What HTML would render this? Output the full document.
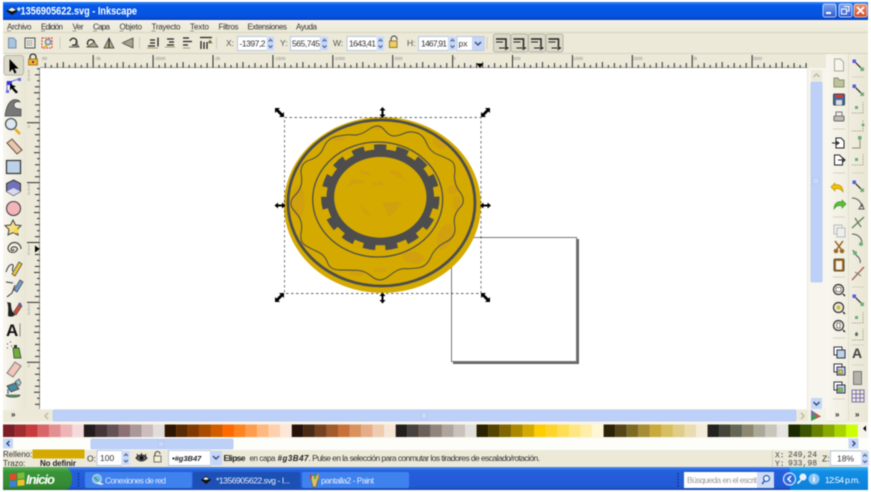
<!DOCTYPE html>
<html><head><meta charset="utf-8"><title>Inkscape</title>
<style>
html,body{margin:0;padding:0;background:#fff;width:871px;height:492px;overflow:hidden}
svg{display:block;filter:blur(.45px)}
text{font-family:"Liberation Sans",sans-serif;fill:#333;font-size:8.5px}
</style></head><body>
<svg width="871" height="492" viewBox="0 0 871 492" xmlns="http://www.w3.org/2000/svg">
<defs>
<linearGradient id="tb" x1="0" y1="0" x2="0" y2="1"><stop offset="0" stop-color="#2f83f4"/><stop offset=".2" stop-color="#0558e6"/><stop offset=".8" stop-color="#0553e0"/><stop offset="1" stop-color="#0a3fb8"/></linearGradient>
<linearGradient id="tk" x1="0" y1="0" x2="0" y2="1"><stop offset="0" stop-color="#4a8cf0"/><stop offset=".15" stop-color="#2560dc"/><stop offset=".85" stop-color="#2359d4"/><stop offset="1" stop-color="#1a47ac"/></linearGradient>
<linearGradient id="tray" x1="0" y1="0" x2="0" y2="1"><stop offset="0" stop-color="#3fb2f2"/><stop offset=".2" stop-color="#128fe6"/><stop offset="1" stop-color="#0d7fd8"/></linearGradient>
<linearGradient id="st" x1="0" y1="0" x2="0" y2="1"><stop offset="0" stop-color="#5cb55c"/><stop offset=".2" stop-color="#3a943a"/><stop offset=".85" stop-color="#338a33"/><stop offset="1" stop-color="#2a702a"/></linearGradient>
<linearGradient id="pl" x1="0" y1="0" x2="1" y2="0"><stop offset="0" stop-color="#f8f6ee"/><stop offset="1" stop-color="#e9e6d4"/></linearGradient>
<linearGradient id="men" x1="0" y1="0" x2="0" y2="1"><stop offset="0" stop-color="#f3f1e5"/><stop offset="1" stop-color="#ebe8d6"/></linearGradient>
<linearGradient id="bm" x1="0" y1="0" x2="0" y2="1"><stop offset="0" stop-color="#7fa6ef"/><stop offset="1" stop-color="#2b58cf"/></linearGradient>
<linearGradient id="bc" x1="0" y1="0" x2="0" y2="1"><stop offset="0" stop-color="#ee9274"/><stop offset="1" stop-color="#d24a22"/></linearGradient>
<pattern id="rh" patternUnits="userSpaceOnUse" x="32.8" y="54" width="59.9" height="14">
<path d="M.5 1V14M6.5 11V14M12.5 9V14M18.5 11V14M24.5 9V14M30.5 8V14M36.5 11V14M42.5 9V14M48.5 11V14M54.5 9V14" stroke="#2a2a2a" fill="none"/></pattern>
<pattern id="rv" patternUnits="userSpaceOnUse" x="26" y="2.4" width="14" height="59.9">
<path d="M1 .5H14M11 6.5H14M9 12.5H14M11 18.5H14M9 24.5H14M8 30.5H14M11 36.5H14M9 42.5H14M11 48.5H14M9 54.5H14" stroke="#2a2a2a" fill="none"/></pattern>
<g id="sp"><rect width="7" height="14" fill="#c6d6f6" stroke="#dbe4f8"/><path d="M1.6 5L3.5 3l1.9 2M1.6 9l1.9 2 1.9-2" fill="none" stroke="#44598c" stroke-width="1.1"/></g>
<path id="hd" d="M-4.5-4.500H.5L-1-3l4 4 1.500-1.500v5h-5L1 3l-4-4-1.500 1.500z" fill="#000"/>
<path id="hv" d="M0-5.500L3-2H1V2H3L0 5.500-3 2H-1V-2H-3z" fill="#000"/>
<g id="snap"><rect x="-8.500" y="-9" width="17" height="18" rx="2" fill="#dcd9c8" stroke="#b9b6a6"/><path d="M-6-4H4V3" fill="none" stroke="#222" stroke-width="1.500"/><path d="M-6-1H1" stroke="#222"/><path d="M-3 5H5M3 3l3 2-3 2" fill="none" stroke="#222"/></g>
<g id="pt"><path d="M-3-3L3 3" stroke="#222" stroke-width="1.200"/><rect x="-5.500" y="-5.500" width="3.500" height="3.500" fill="#5a5adf"/><rect x="2.500" y="2.500" width="3.500" height="3.500" fill="#6fae7a"/></g>
<g id="sn"><path d="M-5 6H6M6 6V-5" fill="none" stroke="#a9a98c" stroke-dasharray="1.500 1"/><rect x="-2" y="-1" width="3" height="3" fill="#6fae7a"/></g>
</defs>

<!-- window base -->
<rect x="3" y="2" width="865" height="488" fill="#ece9d8"/>
<rect x="3" y="2" width="865" height="18" fill="url(#tb)"/>
<path d="M6 11l6-4 6 4-6 4z" fill="#111"/><path d="M8 10l4-2.500 4 2.500-4 1.500z" fill="#eee"/>
<text x="17" y="14.500" textLength="120" lengthAdjust="spacingAndGlyphs" style="fill:#fff;font-weight:bold;font-size:11px">*1356905622.svg - Inkscape</text>
<rect x="823" y="4" width="13" height="13" rx="2" fill="url(#bm)" stroke="#dfe8fb" stroke-width=".8"/><rect x="826" y="12" width="5" height="2" fill="#fff"/>
<rect x="839" y="4" width="13" height="13" rx="2" fill="url(#bm)" stroke="#dfe8fb" stroke-width=".8"/><path d="M844 6.500h5v4.500h-2M841.500 9h5v5h-5z" fill="none" stroke="#fff"/>
<rect x="854" y="4" width="13" height="13" rx="2" fill="url(#bc)" stroke="#f3dcd4" stroke-width=".8"/><path d="M857 7l7 7M864 7l-7 7" stroke="#fff" stroke-width="1.800"/>

<!-- menu -->
<rect x="3" y="20" width="865" height="13" fill="url(#men)"/>
<path d="M3 32.500H868" stroke="#d8d5c2"/>
<g style="font-size:8px">
<text x="7" y="29.500" style="font-size:8px" textLength="24.500">Archivo</text><text x="41" y="29.500" style="font-size:8px" textLength="22">Edición</text><text x="72.500" y="29.500" style="font-size:8px" textLength="11">Ver</text><text x="93" y="29.500" style="font-size:8px" textLength="17">Capa</text><text x="119.500" y="29.500" style="font-size:8px" textLength="22.500">Objeto</text><text x="151.500" y="29.500" style="font-size:8px" textLength="29">Trayecto</text><text x="190" y="29.500" style="font-size:8px" textLength="19">Texto</text><text x="218.500" y="29.500" style="font-size:8px" textLength="20">Filtros</text><text x="247.500" y="29.500" style="font-size:8px" textLength="39.500">Extensiones</text><text x="296" y="29.500" style="font-size:8px" textLength="21">Ayuda</text>
</g>
<path d="M7 31h4M41 31h4M72.500 31h4M93 31h4M119.500 31h4M151.500 31h4M190 31h4" stroke="#555" stroke-width=".6"/>

<!-- command bar -->
<rect x="3" y="33" width="865" height="21" fill="#ece9d8"/>
<path d="M3 53.500H868" stroke="#d6d3c0"/>
<path d="M60 37v12M139.500 37v12M216.500 37v12M487 37v12" stroke="#cfccba"/>
<path d="M8.500 38h5l2.500 2.500V48H8.500z" fill="#a8c4e0" stroke="#7790aa"/>
<rect x="25" y="38" width="10" height="10" fill="#e6e6de" stroke="#555"/><path d="M27 41h6M27 43h6M27 45h6" stroke="#777" stroke-dasharray="1 1"/>
<rect x="42" y="38" width="10" height="10" fill="#f4ecd0" stroke="#d23a3a" stroke-dasharray="2 1"/><circle cx="48" cy="42" r="2.800" fill="#c8dcec" stroke="#667"/><path d="M43 47l3-2 2 2z" fill="#d4aa00"/>
<g fill="none" stroke="#222" stroke-width="1.300">
<path d="M70 41a3.500 3.500 0 1 1 2 4"/><path d="M88 45a3.500 3.500 0 1 1 5 1"/></g>
<path d="M69 47h10l-3-5v5zM87 47h11l-4-5zM104 48l5-10 5 10zM122 43l11-5v10z" fill="#b0a68a" stroke="#333" stroke-width=".7"/>
<path d="M109 38v10" stroke="#222"/><path d="M122 43h11" stroke="#999"/>
<g stroke="#222" stroke-width="1.300"><path d="M148 46h7M150 43h5M150 40h5M158 37.500v9"/><path d="M167 39h7M169 42h5M167 45h7" /><path d="M183 38h6M183 41.500h9M183 45h5"/><path d="M200 37.500h12M201 41v8M204 42v7M207 42v7"/></g>
<path d="M147 48h11M165 47h10M183 48h7M210 40l-2 3h4z" stroke="#a8986a" fill="#222"/>

<text x="226" y="46" style="font-size:8.500px;fill:#555">X:</text>
<rect x="237.500" y="36.500" width="29.500" height="14" fill="#fff" stroke="#b8c8dc"/><text x="239.500" y="46.500" style="font-size:8.500px" textLength="26">-1397,2</text><use href="#sp" x="267" y="36.500"/>
<text x="280" y="46" style="font-size:8.500px;fill:#555">Y:</text>
<rect x="290.500" y="36.500" width="30" height="14" fill="#fff" stroke="#b8c8dc"/><text x="292" y="46.500" style="font-size:8.500px" textLength="28">565,745</text><use href="#sp" x="321" y="36.500"/>
<text x="333" y="46" style="font-size:8.500px;fill:#555">W:</text>
<rect x="347" y="36.500" width="30" height="14" fill="#fff" stroke="#b8c8dc"/><text x="349" y="46.500" style="font-size:8.500px" textLength="27">1643,41</text><use href="#sp" x="377" y="36.500"/>
<path d="M391 41v-2a3 3 0 0 1 6 0v1" fill="none" stroke="#555" stroke-width="1.200"/><rect x="389.500" y="41" width="7.500" height="6.500" fill="#f0d060" stroke="#776020" stroke-width=".8"/>
<text x="407" y="46" style="font-size:8.500px;fill:#555">H:</text>
<rect x="418.500" y="36.500" width="30" height="14" fill="#fff" stroke="#b8c8dc"/><text x="421" y="46.500" style="font-size:8.500px" textLength="26">1467,91</text><use href="#sp" x="449" y="36.500"/>
<rect x="457" y="36.500" width="27" height="14" fill="#fff" stroke="#b8c8dc"/><text x="458.500" y="46.500" style="font-size:8.500px">px</text><rect x="472" y="37" width="12" height="13" fill="#c6d6f6"/><path d="M475 42l3 3 3-3" fill="none" stroke="#3a4f80" stroke-width="1.500"/>
<use href="#snap" x="502" y="43"/><use href="#snap" x="519.500" y="43"/><use href="#snap" x="537" y="43"/><use href="#snap" x="554.500" y="43"/>

<!-- side panels -->
<rect x="3" y="54" width="23" height="367" fill="url(#pl)"/>
<rect x="826" y="54" width="42" height="367" fill="url(#pl)"/>
<path d="M848.500 54V421" stroke="#e2dfcd"/>
<rect x="3" y="410" width="37" height="12" fill="#ece9d8"/>

<!-- rulers -->
<rect x="26" y="54" width="782" height="14" fill="#ece9d8"/>
<rect x="26" y="54" width="14" height="356" fill="#ece9d8"/>
<rect x="40" y="54" width="767" height="14" fill="url(#rh)"/>
<rect x="26" y="68" width="14" height="341" fill="url(#rv)"/>
<path d="M40 67.500H807M39.500 68V409" stroke="#555" stroke-width=".6"/>
<text x="42" y="60" style="font-size:4.500px;fill:#888">00</text><text x="94.500" y="60" style="font-size:4.500px;fill:#888">-3k</text><text x="154" y="60" style="font-size:4.500px;fill:#888">-2500</text><text x="214" y="60" style="font-size:4.500px;fill:#888">-2k</text><text x="274" y="60" style="font-size:4.500px;fill:#888">-1500</text><text x="333.500" y="60" style="font-size:4.500px;fill:#888">-1000</text><text x="393.500" y="60" style="font-size:4.500px;fill:#888">-500</text><text x="453" y="60" style="font-size:4.500px;fill:#888">0</text><text x="513" y="60" style="font-size:4.500px;fill:#888">500</text><text x="573" y="60" style="font-size:4.500px;fill:#888">1000</text><text x="632.500" y="60" style="font-size:4.500px;fill:#888">1500</text><text x="692.500" y="60" style="font-size:4.500px;fill:#888">2k</text><text x="752" y="60" style="font-size:4.500px;fill:#888">2500</text>
<text x="27.500" y="73" style="font-size:4.500px;fill:#999">5</text><text x="27.500" y="77" style="font-size:4.500px;fill:#999">0</text><text x="27.500" y="81" style="font-size:4.500px;fill:#999">0</text>
<text x="27.500" y="128" style="font-size:4.500px;fill:#999">0</text>
<text x="27.500" y="187" style="font-size:4.500px;fill:#999">5</text><text x="27.500" y="191" style="font-size:4.500px;fill:#999">0</text><text x="27.500" y="195" style="font-size:4.500px;fill:#999">0</text>
<text x="27.500" y="247" style="font-size:4.500px;fill:#999">1</text><text x="27.500" y="251" style="font-size:4.500px;fill:#999">0</text><text x="27.500" y="255" style="font-size:4.500px;fill:#999">0</text>
<text x="27.500" y="307" style="font-size:4.500px;fill:#999">1</text><text x="27.500" y="311" style="font-size:4.500px;fill:#999">5</text><text x="27.500" y="315" style="font-size:4.500px;fill:#999">0</text>
<text x="27.500" y="367" style="font-size:4.500px;fill:#999">2</text>
<path d="M476.500 63.500h7l-3.500 4.500z" fill="#000"/><path d="M35 245.500v7l4.500-3.500z" fill="#000"/>
<path d="M30 59v-2a3 3 0 0 1 6 0v2" fill="none" stroke="#333" stroke-width="1.300"/><rect x="28.500" y="59" width="9" height="6" fill="#f2b430" stroke="#8a5a10" stroke-width=".7"/><rect x="32" y="61" width="2" height="2" fill="#533"/>

<!-- canvas -->
<rect x="40" y="68" width="767" height="341" fill="#fff"/>

<!-- page -->
<rect x="453" y="239" width="126" height="125" fill="#666"/>
<rect x="451.500" y="237.500" width="125" height="124" fill="#fff" stroke="#777"/>

<!-- coin -->
<ellipse cx="382.400" cy="205" rx="98.500" ry="88" fill="#d4aa00"/>
<g transform="translate(270 100) scale(.33333)">
<g fill="#d1a00e">
<ellipse cx="85" cy="305" rx="20" ry="48"/><ellipse cx="205" cy="115" rx="22" ry="9"/><ellipse cx="325" cy="85" rx="18" ry="6"/><ellipse cx="508" cy="130" rx="22" ry="14" transform="rotate(35 508 130)"/><ellipse cx="548" cy="270" rx="16" ry="14"/><ellipse cx="560" cy="310" rx="12" ry="22"/><ellipse cx="525" cy="410" rx="22" ry="40" transform="rotate(20 525 410)"/><ellipse cx="430" cy="472" rx="32" ry="18" transform="rotate(10 430 472)"/><ellipse cx="260" cy="520" rx="22" ry="8"/><ellipse cx="330" cy="510" rx="18" ry="6"/>
<path d="M228 262l20-26 28 4 10 8-30 4zM262 210l30 4 12 12-24-2zM360 208l28 8 22 30-24-14-26-14zM304 250l16-8 2 18zM326 240l18 12-18 8zM336 310l46-6 14 6-26 30-16 14-6-24zM268 312l28 24 6 14-24-16z"/>
</g>
<path d="M297.500 87.500Q325 68 341.500 88Q358 108 371.500 108Q385 108 402.500 100Q420 92 440 98.500Q460 105 470 130Q480 155 502.500 163.500Q525 172 541.500 181Q558 190 554 220Q550 250 570 276.500Q590 303 569 324Q548 345 554 377.500Q560 410 527.500 426Q495 442 482.500 471Q470 500 445 503.500Q420 507 402.500 506Q385 505 357.500 527.500Q330 550 307.500 531Q285 512 262.500 511Q240 510 210 510Q180 510 172.500 487.500Q165 465 142.500 455Q120 445 104 435Q88 425 94 392.500Q100 360 75 335Q50 310 75 286Q100 262 94 226Q88 190 119 180Q150 170 161 142.500Q172 115 201 109Q230 103 250 105Q270 107 297.500 87.500Z" fill="none" stroke="#5a5540" stroke-width="3.500" stroke-linejoin="round"/>
</g>
<ellipse cx="381.500" cy="203" rx="93.500" ry="83" fill="none" stroke="#4d4d4d" stroke-width="2.800"/>
<ellipse cx="377.700" cy="199.500" rx="65" ry="57.500" fill="none" stroke="#4d4d4d" stroke-width="1.300"/>
<ellipse cx="380.300" cy="197.300" rx="56.200" ry="50" fill="none" stroke="#4d4d4d" stroke-width="6" pathLength="150" stroke-dasharray="5.500 4.500" stroke-dashoffset=".25"/>
<ellipse cx="380.300" cy="197.300" rx="50" ry="44.200" fill="none" stroke="#4d4d4d" stroke-width="7.600"/>

<!-- selection -->
<rect x="284.500" y="117.500" width="196.500" height="176" fill="none" stroke="#000" stroke-opacity=".6" stroke-width=".9" stroke-dasharray="2.500 2.500"/>
<use href="#hd" x="279.500" y="112.500"/><use href="#hd" x="485.500" y="297.500"/>
<use href="#hd" transform="translate(485.500 112.500) rotate(90)"/><use href="#hd" transform="translate(279.500 297.500) rotate(90)"/>
<use href="#hv" x="382.500" y="112.500"/><use href="#hv" x="382.500" y="298"/>
<use href="#hv" transform="translate(280 205.500) rotate(90)"/><use href="#hv" transform="translate(485.500 205.500) rotate(90)"/>

<!-- vertical scrollbar -->
<rect x="808" y="68" width="18" height="342" fill="#f6f5ee"/>
<rect x="811" y="70" width="11" height="11" rx="1" fill="#ece9d8"/><path d="M813.500 77l3-3 3 3" fill="none" stroke="#b9b6a6" stroke-width="1.300"/>
<rect x="811" y="82" width="11" height="200" rx="1" fill="#bdd0f8" stroke="#a9c0f0" stroke-width=".6"/>
<rect x="813" y="178" width="6" height="6" fill="#c9d8f8" stroke="#aac0ea" stroke-width=".6"/>
<rect x="811" y="398" width="11" height="11" rx="1" fill="#c6d6f6"/><path d="M813.500 402l3 3 3-3" fill="none" stroke="#2c4478" stroke-width="1.400"/>

<!-- horizontal scrollbar -->
<rect x="40" y="409" width="786" height="13" fill="#f4f2e6"/>
<rect x="40" y="410" width="12" height="11" rx="1" fill="#ece9d8"/><path d="M48 413l-3 3 3 3" fill="none" stroke="#b9b6a6" stroke-width="1.300"/>
<rect x="53" y="410" width="743" height="11" rx="1" fill="#bdd0f8" stroke="#a9c0f0" stroke-width=".6"/>
<rect x="421" y="412.500" width="6" height="6" fill="#c9d8f8" stroke="#aac0ea" stroke-width=".6"/>
<rect x="797" y="410" width="11" height="11" rx="1" fill="#ece9d8"/><path d="M801 413l3 3-3 3" fill="none" stroke="#b9b6a6" stroke-width="1.300"/>
<path d="M811 410l10 6.500-10 4.500z" fill="#3c9a58"/><path d="M811 410l4 3-4 3z" fill="#8a60c0"/><path d="M815 413l6 3.500-6 1z" fill="#d05050"/>

<!-- left tools -->
<rect x="4" y="55.500" width="19.500" height="19.500" rx="2.500" fill="#dcd9c8" stroke="#b8b5a5"/>
<path d="M9.500 59v13l3-3 2 4.500 2-1-2-4h4z" fill="#000"/>
<path d="M7 93V82h2.500L19 79" fill="none" stroke="#7070e0"/><rect x="6" y="90" width="3" height="3" fill="#6a6ae0"/><rect x="18" y="78" width="3" height="3" fill="#6a6ae0"/><rect x="7" y="81" width="5" height="4" fill="#3535e8"/><path d="M10 84v6.500l1.500-2 4.500 5 2-1.500-4.500-4.500 2.500-1z" fill="#000"/>
<path d="M5 116c1-8 3-14 8-16 3-1 6 0 7 2-3-1-6 0-6 3 0 3 3 4 7 4v7z" fill="#777" stroke="#444" stroke-width=".7"/>
<circle cx="11" cy="124" r="5.500" fill="#dbe8f2" stroke="#555" stroke-width="1.300"/><path d="M15 129l5 5" stroke="#e8a81c" stroke-width="2.500"/>
<path d="M7 143l5-4 10 11-5 4z" fill="#e6c8b0" stroke="#6b4a40"/>
<rect x="6.500" y="160.500" width="14" height="13" fill="#bcd2e8" stroke="#333" stroke-width="1.200"/>
<path d="M13.500 180l7 3.500v8l-7 4-7-4v-8z" fill="#7272b8" stroke="#333"/><path d="M13.500 188l7 3.500-7 4-7-4z" fill="#d8d8f0"/>
<circle cx="13.500" cy="208.500" r="7" fill="#f5b4bc" stroke="#444" stroke-width="1.100"/>
<path d="M13 220l2.500 5 5.500.5-4 4 1 5.500-5-2.500-5 2.500 1-5.500-4-4 5.500-.5z" fill="#f4e08a" stroke="#444"/><path d="M16 227l1.500 2 2.500.3-1.800 1.800.5 2.400-2.700-1.300-2.300 1.300.5-2.400-1.800-1.800 2.500-.3z" fill="#f6d84a"/>
<path d="M14 249a1.500 1.500 0 0 1-3 0 3.500 3.500 0 0 1 6.500 0 5 5 0 0 1-9.500 0 6.500 6.500 0 0 1 13 0" fill="none" stroke="#444" stroke-width="1.200"/>
<path d="M6 272c2-6 5-9 7-7 1 3-2 5 0 6" fill="none" stroke="#333"/><path d="M12 274l7-12 3 2-7 12z" fill="#ecc340" stroke="#333" stroke-width=".7"/>
<path d="M6 282l7 1M7 297l5-4 3-8" fill="none" stroke="#333"/><path d="M14 290l6-10 3 2-6 10z" fill="#6f9fd0" stroke="#333" stroke-width=".7"/>
<path d="M7 302c2 4 1 10 1 14 2 1 5 1 7-1-3-3-4-7-4-12z" fill="#222"/><path d="M13 313l6-9 3 2-6 9z" fill="#c9503a" stroke="#333" stroke-width=".6"/><path d="M19 303l2 2" stroke="#3a5ac0" stroke-width="2"/>
<text x="6" y="336" style="font:bold 17px 'Liberation Sans',sans-serif;fill:#111">A</text><path d="M20 323.500v13" stroke="#888"/>
<path d="M7 344h1M10 342h1M7 348h1M11 346h1" stroke="#555" stroke-width="1.300"/><path d="M13 348h6l2 10h-7z" fill="#6fae3c" stroke="#333" stroke-width=".7"/><rect x="14" y="345" width="3" height="3" fill="#333"/>
<path d="M7 373l8-11 6 4-8 11z" fill="#f2c6b8" stroke="#777"/>
<path d="M7 386l8-3 4 6-8 3z" fill="#4a8a9c" stroke="#333" stroke-width=".7"/><path d="M15 382l4-3 2 4-2 3z" fill="#9cc8d8" stroke="#333" stroke-width=".6"/><path d="M6 395h14c0 3-14 3-14 0z" fill="#5a9a5a" stroke="#333" stroke-width=".6"/><path d="M8 389v5" stroke="#3f6fa0" stroke-width="1.400"/>
<text x="11" y="417" style="font-size:8px;font-weight:bold;fill:#222">»</text>

<!-- right col 1 -->
<path d="M834.500 59h6l3 3v9h-9z" fill="#f5f5ee" stroke="#a9a99a"/>
<path d="M834 78h4l1 2h5v7h-10z" fill="#bcc49a" stroke="#8d8d70"/>
<rect x="833.500" y="94" width="11" height="11" rx="1" fill="#3f6a9c" stroke="#345"/><rect x="835" y="94.500" width="8" height="3" fill="#d23a3a"/><rect x="836" y="100" width="6" height="5" fill="#ddd"/>
<rect x="834" y="116" width="10" height="5" rx="1" fill="#bdbdb4" stroke="#666"/><rect x="836" y="112" width="6" height="4" fill="#f0f0ea" stroke="#777"/>
<path d="M833 129h12M833 173h12M833 217h12M833 277h12M833 338h12M833 399h12M852 77h12M852 173h12M852 287h12M852 345h12M852 365h12" stroke="#d6d3c0"/>
<path d="M836 138h5l3 3v7h-8zM832 143h6M836 141l3 2-3 2" fill="#fff" stroke="#222" stroke-width="1"/>
<path d="M834.500 155h5l3 3v7h-8zM838 160h7M843 158l2 2-2 2" fill="#fff" stroke="#222" stroke-width="1"/>
<path d="M843 192c0-6-4-8-8-7v-2l-4 4 4 4v-2c3-1 6 0 8 3z" fill="#f2c200" stroke="#b58a00" stroke-width=".6"/>
<path d="M834 209c0-6 4-8 8-7v-2l4 4-4 4v-2c-3-1-6 0-8 3z" fill="#5cbf3c" stroke="#3d8a22" stroke-width=".6"/>
<rect x="834" y="225" width="8" height="9" fill="#eee" stroke="#bbb"/><rect x="837" y="228" width="8" height="9" fill="#eee" stroke="#bbb"/>
<path d="M835 241l6 8M843 241l-6 8" stroke="#9a6a2a" stroke-width="1.500"/><circle cx="836" cy="251" r="2.300" fill="#9a6a2a"/><circle cx="842" cy="251" r="2.300" fill="#9a6a2a"/>
<rect x="834" y="259" width="10" height="12" rx="1" fill="#a8641e" stroke="#553"/><rect x="836" y="261" width="6" height="8.500" fill="#f4f4ec"/>
<g fill="#e8e8dc" stroke="#333" stroke-width="1.200"><circle cx="838.500" cy="289.500" r="5"/><circle cx="838.500" cy="307.500" r="5"/><circle cx="838.500" cy="325.500" r="5"/></g>
<rect x="836" y="287.500" width="5" height="4" fill="#fff" stroke="#444" stroke-width=".6"/><circle cx="838.500" cy="307.500" r="2" fill="#d8b830"/><rect x="837" y="323" width="3" height="5" fill="#fff" stroke="#444" stroke-width=".6"/>
<path d="M843 294l2 2M843 312l2 2M843 330l2 2" stroke="#222" stroke-width="1.300"/>
<rect x="834" y="347" width="8" height="8" fill="#fff" stroke="#223" stroke-width=".9"/><rect x="837" y="350" width="8" height="8" fill="#bcd2e8" stroke="#223" stroke-width=".9"/>
<rect x="834" y="364" width="8" height="8" fill="#fff" stroke="#223" stroke-width=".9"/><rect x="837" y="367" width="8" height="8" fill="#bcd2e8" stroke="#223" stroke-width=".9"/><rect x="838.500" y="370" width="4" height="3.500" fill="#e8c840" stroke="#333" stroke-width=".4"/>
<rect x="834" y="382" width="8" height="8" fill="#fff" stroke="#223" stroke-width=".9"/><rect x="837" y="385" width="8" height="8" fill="#bcd2e8" stroke="#223" stroke-width=".9"/><rect x="838.500" y="388" width="4" height="3.500" fill="#8ac84a" stroke="#333" stroke-width=".4"/>
<text x="835" y="417" style="font-size:8px;font-weight:bold;fill:#222">»</text>

<!-- right col 2 -->
<use href="#pt" x="858" y="65"/><use href="#pt" x="858" y="90"/><use href="#pt" x="858" y="186"/><use href="#pt" x="858" y="300"/>
<g transform="translate(857 107)"><use href="#sn"/></g><g transform="translate(857 125)"><path d="M-5 6H6V-5" fill="none" stroke="#a9a98c" stroke-dasharray="1.500 1"/><circle cx="6" cy="0" r="1.500" fill="#6fae7a"/></g>
<g transform="translate(857 142)"><path d="M-5 6H3V-5" fill="none" stroke="#8f8f6e"/><rect x="1" y="-6" width="3.500" height="3.500" fill="#6fae7a"/></g>
<g transform="translate(857 159)"><use href="#sn"/></g>
<path d="M852 198c5 0 9 3 10 9M859 209h5l-2-5z" fill="none" stroke="#555"/>
<path d="M852 228l12-11M855 218l6 9" stroke="#5d7d5c" stroke-width="1.200"/>
<path d="M852 234c5 0 9 3 10 8" fill="none" stroke="#555"/><circle cx="861" cy="244" r="2" fill="#6fae7a"/>
<path d="M853 250c1 5 5 6 6 8s2 3 1 5" fill="none" stroke="#555"/><circle cx="855" cy="253" r="2" fill="#6fae7a"/>
<path d="M852 280l12-13" stroke="#b05a5a" stroke-width="1.300"/><path d="M855 272l6 4" stroke="#5f8a5f"/>
<g transform="translate(857 317)"><use href="#sn"/></g><g transform="translate(857 334)"><use href="#sn"/><path d="M-2 0H1M-.500-2V2" stroke="#555"/></g>
<text x="852" y="358" style="font:bold 14px 'Liberation Sans',sans-serif;fill:#444">A</text>
<rect x="853.500" y="371.500" width="8" height="13" fill="#b3b3a9" stroke="#777"/>
<rect x="852" y="390" width="12" height="12" fill="none" stroke="#7a6fb0"/><path d="M856 390v12M860 390v12M852 394h12M852 398h12" stroke="#7a6fb0"/>
<text x="855" y="417" style="font-size:8px;font-weight:bold;fill:#222">»</text>

<!-- palette -->
<rect x="3" y="422" width="865" height="16" fill="#f6f4ea"/>
<g>
<rect x="3" y="424.500" width="11.600" height="12.500" fill="#7a1f26"/><rect x="14.550" y="424.500" width="11.600" height="12.500" fill="#a12c30"/><rect x="26.100" y="424.500" width="11.600" height="12.500" fill="#c83a3c"/><rect x="37.650" y="424.500" width="11.600" height="12.500" fill="#d8656a"/><rect x="49.200" y="424.500" width="11.600" height="12.500" fill="#e38e92"/><rect x="60.750" y="424.500" width="11.600" height="12.500" fill="#edb5b8"/><rect x="72.300" y="424.500" width="11.600" height="12.500" fill="#f5dadc"/>
<rect x="83.850" y="424.500" width="11.600" height="12.500" fill="#231c1e"/><rect x="95.400" y="424.500" width="11.600" height="12.500" fill="#453538"/><rect x="106.950" y="424.500" width="11.600" height="12.500" fill="#645055"/><rect x="118.500" y="424.500" width="11.600" height="12.500" fill="#8c7073"/><rect x="130.050" y="424.500" width="11.600" height="12.500" fill="#ab9698"/><rect x="141.600" y="424.500" width="11.600" height="12.500" fill="#ccbcbc"/><rect x="153.150" y="424.500" width="11.600" height="12.500" fill="#e2dcdc"/>
<rect x="164.700" y="424.500" width="11.600" height="12.500" fill="#2e1600"/><rect x="176.250" y="424.500" width="11.600" height="12.500" fill="#5a2a00"/><rect x="187.800" y="424.500" width="11.600" height="12.500" fill="#803a00"/><rect x="199.350" y="424.500" width="11.600" height="12.500" fill="#a84c00"/><rect x="210.900" y="424.500" width="11.600" height="12.500" fill="#d15c00"/><rect x="222.450" y="424.500" width="11.600" height="12.500" fill="#ff6a00"/><rect x="234" y="424.500" width="11.600" height="12.500" fill="#ff8420"/><rect x="245.550" y="424.500" width="11.600" height="12.500" fill="#ff9d4f"/><rect x="257.100" y="424.500" width="11.600" height="12.500" fill="#ffb880"/><rect x="268.650" y="424.500" width="11.600" height="12.500" fill="#ffd0ae"/><rect x="280.200" y="424.500" width="11.600" height="12.500" fill="#ffe7d8"/>
<rect x="291.750" y="424.500" width="11.600" height="12.500" fill="#241208"/><rect x="303.300" y="424.500" width="11.600" height="12.500" fill="#4a2a14"/><rect x="314.850" y="424.500" width="11.600" height="12.500" fill="#74421f"/><rect x="326.400" y="424.500" width="11.600" height="12.500" fill="#a05a2c"/><rect x="337.950" y="424.500" width="11.600" height="12.500" fill="#c8703a"/><rect x="349.500" y="424.500" width="11.600" height="12.500" fill="#d9925f"/><rect x="361.050" y="424.500" width="11.600" height="12.500" fill="#e6ae88"/><rect x="372.600" y="424.500" width="11.600" height="12.500" fill="#f0cbb0"/><rect x="384.150" y="424.500" width="11.600" height="12.500" fill="#f5e6d8"/>
<rect x="395.700" y="424.500" width="11.600" height="12.500" fill="#22201e"/><rect x="407.250" y="424.500" width="11.600" height="12.500" fill="#48423e"/><rect x="418.800" y="424.500" width="11.600" height="12.500" fill="#6a6058"/><rect x="430.350" y="424.500" width="11.600" height="12.500" fill="#91847a"/><rect x="441.900" y="424.500" width="11.600" height="12.500" fill="#aea69e"/><rect x="453.450" y="424.500" width="11.600" height="12.500" fill="#c8c2bc"/><rect x="465" y="424.500" width="11.600" height="12.500" fill="#e2e0dc"/>
<rect x="476.550" y="424.500" width="11.600" height="12.500" fill="#2a2200"/><rect x="488.100" y="424.500" width="11.600" height="12.500" fill="#554400"/><rect x="499.650" y="424.500" width="11.600" height="12.500" fill="#806600"/><rect x="511.200" y="424.500" width="11.600" height="12.500" fill="#aa8800"/><rect x="522.750" y="424.500" width="11.600" height="12.500" fill="#d4aa00"/><rect x="534.300" y="424.500" width="11.600" height="12.500" fill="#ffcc00"/><rect x="545.850" y="424.500" width="11.600" height="12.500" fill="#ffd42a"/><rect x="557.400" y="424.500" width="11.600" height="12.500" fill="#ffdd55"/><rect x="568.950" y="424.500" width="11.600" height="12.500" fill="#ffe680"/><rect x="580.500" y="424.500" width="11.600" height="12.500" fill="#ffeeaa"/><rect x="592.050" y="424.500" width="11.600" height="12.500" fill="#fff6d5"/>
<rect x="603.600" y="424.500" width="11.600" height="12.500" fill="#2b2207"/><rect x="615.150" y="424.500" width="11.600" height="12.500" fill="#554415"/><rect x="626.700" y="424.500" width="11.600" height="12.500" fill="#7d6a22"/><rect x="638.250" y="424.500" width="11.600" height="12.500" fill="#a68c33"/><rect x="649.800" y="424.500" width="11.600" height="12.500" fill="#c9a83c"/><rect x="661.350" y="424.500" width="11.600" height="12.500" fill="#d6bf60"/><rect x="672.900" y="424.500" width="11.600" height="12.500" fill="#e0cd88"/><rect x="684.450" y="424.500" width="11.600" height="12.500" fill="#eadcb0"/><rect x="696" y="424.500" width="11.600" height="12.500" fill="#f3ecd8"/>
<rect x="707.550" y="424.500" width="11.600" height="12.500" fill="#222220"/><rect x="719.100" y="424.500" width="11.600" height="12.500" fill="#45443a"/><rect x="730.650" y="424.500" width="11.600" height="12.500" fill="#666655"/><rect x="742.200" y="424.500" width="11.600" height="12.500" fill="#8c8870"/><rect x="753.750" y="424.500" width="11.600" height="12.500" fill="#aaa898"/><rect x="765.300" y="424.500" width="11.600" height="12.500" fill="#c8c6ba"/><rect x="776.850" y="424.500" width="11.600" height="12.500" fill="#e4e4e0"/>
<rect x="788.400" y="424.500" width="11.600" height="12.500" fill="#1c2a00"/><rect x="799.950" y="424.500" width="11.600" height="12.500" fill="#3a5500"/><rect x="811.500" y="424.500" width="11.600" height="12.500" fill="#668000"/><rect x="823.050" y="424.500" width="11.600" height="12.500" fill="#88aa00"/><rect x="834.600" y="424.500" width="11.600" height="12.500" fill="#aad400"/><rect x="846.150" y="424.500" width="11.600" height="12.500" fill="#ccff00"/>
</g>
<path d="M866 425.500v6l-3-3z" fill="#000"/>
<rect x="3" y="438" width="865" height="12" fill="#fdfdf9"/>
<rect x="3" y="438.500" width="10" height="10" fill="#c6d6f6"/><path d="M9.500 441l-2.500 2.500 2.500 2.500" fill="none" stroke="#223c78" stroke-width="1.300"/>
<rect x="91" y="439" width="142" height="10" rx="1" fill="#bdd0f8" stroke="#a9c0f0" stroke-width=".6"/><rect x="158.500" y="441.500" width="5.500" height="5" fill="#c9d8f8" stroke="#aac0ea" stroke-width=".6"/>
<rect x="848.500" y="438.500" width="10" height="10" fill="#c6d6f6"/><path d="M852.500 441l2.500 2.500-2.500 2.500" fill="none" stroke="#223c78" stroke-width="1.300"/>

<!-- status bar -->
<rect x="3" y="450" width="865" height="17" fill="#ece9d8"/>
<text x="3" y="457" style="font-size:8px">Relleno:</text><text x="3" y="466" style="font-size:8px">Trazo:</text>
<rect x="32.500" y="449.500" width="52" height="9" fill="#d4aa00"/>
<text x="40" y="466" style="font-size:8px;font-weight:bold;fill:#222" textLength="36">No definir</text>
<text x="87" y="461.500" style="font-size:8.500px">O:</text>
<rect x="97" y="450.500" width="25" height="15" fill="#fff" stroke="#b8c8dc"/><text x="100" y="461" style="font-size:8.500px">100</text><use href="#sp" x="122.500" y="451"/>
<path d="M136 458c3-4 8-4 11 0-3 4-8 4-11 0z" fill="#666" stroke="#222"/><circle cx="141.500" cy="458" r="2" fill="#111"/><path d="M137 454l1 2M141.500 453v2M146 454l-1 2" stroke="#222"/>
<path d="M155 456v-2a2.500 2.500 0 0 1 5 0v0" fill="none" stroke="#444" stroke-width="1.100"/><rect x="154" y="456" width="7" height="6" fill="#f5f0d0" stroke="#555" stroke-width=".8"/>
<rect x="168.500" y="450.500" width="42" height="15" fill="#fff" stroke="#b8c8dc"/><text x="172" y="461" style="font-size:7.500px;font-weight:bold;font-style:italic;fill:#222">•#g3B47</text>
<rect x="210" y="451" width="12" height="14.500" fill="#c6d6f6"/><path d="M213 456l3 3 3-3" fill="none" stroke="#3a4f80" stroke-width="1.500"/>
<text x="223.500" y="461" style="font-size:8.500px;font-weight:bold;fill:#222" textLength="22">Elipse</text>
<text x="249.500" y="461" style="font-size:8px" textLength="26">en capa</text>
<text x="277.500" y="461" style="font-size:8px;font-weight:bold;font-style:italic;fill:#222" textLength="31">#g3B47</text>
<text x="308.500" y="461" style="font-size:8.500px" textLength="231.500">. Pulse en la selección para conmutar los tiradores de escalado/rotación.</text>
<path d="M772.500 450v17" stroke="#d6d3c0"/>
<text x="775" y="457.500" style="font-size:8px;font-family:'Liberation Mono',monospace;fill:#444">X:</text><text x="775" y="466" style="font-size:8px;font-family:'Liberation Mono',monospace;fill:#444">Y:</text>
<text x="788" y="457" style="font-size:8px;font-family:'Liberation Mono',monospace;fill:#444" textLength="29">249,24</text><text x="788" y="465.500" style="font-size:8px;font-family:'Liberation Mono',monospace;fill:#444" textLength="29">933,98</text>
<text x="822" y="461.500" style="font-size:8.500px">Z:</text>
<rect x="830.500" y="451" width="31" height="14.500" fill="#fff" stroke="#b8c8dc"/><text x="837" y="461.500" style="font-size:8.500px">18%</text><use href="#sp" x="861.500" y="451.500"/>

<!-- taskbar -->
<rect x="3" y="467" width="865" height="23" fill="url(#tk)"/>
<path d="M3 467H64c5 0 8 5 8 11.500S69 490 64 490H3z" fill="url(#st)"/>
<path d="M78.500 473v15" stroke="#122e80" stroke-dasharray="1.500 1.500" stroke-width="1.300"/>
<rect x="9.500" y="474" width="7" height="6" fill="#e24a28" transform="skewY(-5) translate(0 1)"/><rect x="17.500" y="473" width="7" height="6" fill="#7fbb3a" transform="skewY(-5) translate(0 1.500)"/><rect x="9.500" y="481" width="7" height="6" fill="#3d7fdc" transform="skewY(-5) translate(0 1)"/><rect x="17.500" y="480" width="7" height="6" fill="#f2c02a" transform="skewY(-5) translate(0 1.500)"/>
<text x="26" y="484" style="font-size:13px;font-weight:bold;font-style:italic;fill:#fff" textLength="29">Inicio</text>
<rect x="85" y="472" width="107" height="16" rx="2" fill="#3f82ee"/>
<circle cx="97" cy="479" r="4.500" fill="#6fb9e8" stroke="#eee" stroke-width=".7"/><path d="M95 483l6 2 3-1-5-2z" fill="#e8e8f0"/><path d="M94 477l4 4" stroke="#3a8a3a"/>
<text x="105" y="483.500" style="font-size:8.500px;fill:#dfeaff" textLength="61">Conexiones de red</text>
<rect x="193" y="472" width="107" height="16" rx="2" fill="#1c50b4"/>
<path d="M201 480l5-4 5 4-5 4z" fill="#111"/><path d="M203 479l3-2 3 2-3 1z" fill="#eee"/>
<text x="216" y="483.500" style="font-size:8.500px;fill:#e6eeff" textLength="74">*1356905622.svg - I...</text>
<rect x="302" y="472" width="107" height="16" rx="2" fill="#3f82ee"/>
<path d="M310 476l3 11h3l3-11" fill="#d9c06a" stroke="#7a5a2a" stroke-width=".7"/><path d="M311 474v5" stroke="#d23a3a" stroke-width="1.500"/><path d="M315 473v6" stroke="#3a9a3a" stroke-width="1.500"/><path d="M318 474v5" stroke="#e8a81c" stroke-width="1.500"/>
<text x="321" y="483.500" style="font-size:8.500px;fill:#e6eeff" textLength="53">pantalla2 - Paint</text>
<path d="M678 473v15" stroke="#122e80" stroke-dasharray="1.500 1.500" stroke-width="1.300"/>
<rect x="684" y="472" width="74" height="16" fill="#fff"/><text x="687" y="483" style="font-size:8.500px;fill:#9a9a9a" textLength="70">Búsqueda en el escrit</text>
<rect x="757" y="472" width="17" height="16" fill="#d0dcf4"/><circle cx="766.500" cy="478.500" r="3" fill="#e8f0ff" stroke="#2b5cb8" stroke-width="1.200"/><path d="M764.500 481l-2.500 3" stroke="#2b5cb8" stroke-width="1.500"/>
<rect x="790" y="467" width="78" height="23" fill="url(#tray)"/>
<circle cx="789.500" cy="479" r="6" fill="#2b6be0" stroke="#d9e8ff" stroke-width="1.200"/><path d="M791 476l-3 3 3 3" fill="none" stroke="#fff" stroke-width="1.500"/>
<circle cx="803" cy="477" r="3.500" fill="#eaf2ff"/><path d="M801 480l-3.500 3.500" stroke="#eaf2ff" stroke-width="1.800"/>
<circle cx="814" cy="479" r="5.500" fill="#8dc4f2"/><path d="M814 477v5M814 475v1" stroke="#fff" stroke-width="1.500"/>
<text x="825" y="483" style="font-size:8.500px;fill:#fff" textLength="35">12:54 p.m.</text>
</svg>
</body></html>
